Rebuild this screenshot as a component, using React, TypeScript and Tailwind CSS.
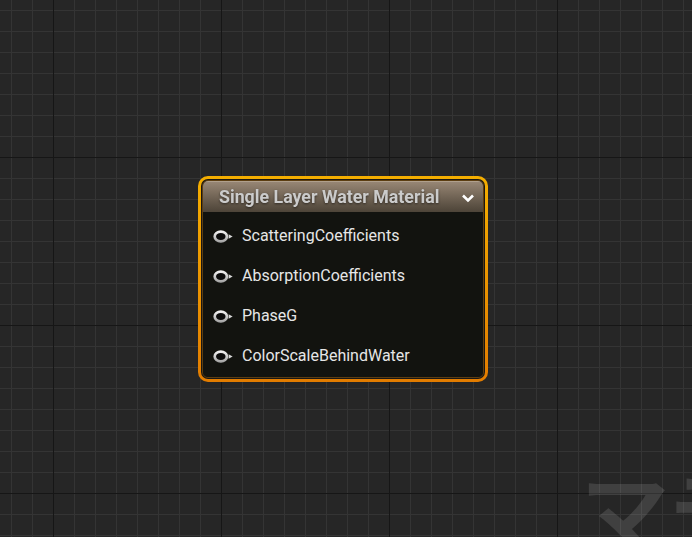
import React from "react";

const pins = [
  "ScatteringCoefficients",
  "AbsorptionCoefficients",
  "PhaseG",
  "ColorScaleBehindWater",
];

function PinIcon() {
  return (
    <svg width="21" height="13" viewBox="0 0 21 13" className="shrink-0">
      <defs>
        <linearGradient id="pinring" x1="0" y1="0" x2="0" y2="1">
          <stop offset="0" stopColor="#f0f0f0" />
          <stop offset="1" stopColor="#a8a8a8" />
        </linearGradient>
      </defs>
      <ellipse cx="7.8" cy="6.5" rx="6.1" ry="4.9" fill="#0c0c0c" stroke="url(#pinring)" strokeWidth="2.7" />
      <path d="M15.6 4.2 L19.6 6.5 L15.6 8.8 Z" fill="#d8d8d8" />
    </svg>
  );
}

export default function App() {
  return (
    <div
      className="relative w-[692px] h-[537px] overflow-hidden bg-[#262626] bg-[image:linear-gradient(to_right,#161616_1px,transparent_1px),linear-gradient(to_bottom,#161616_1px,transparent_1px),linear-gradient(to_right,#343434_1px,transparent_1px),linear-gradient(to_bottom,#343434_1px,transparent_1px)] bg-[size:168px_168px,168px_168px,21px_21px,21px_21px] bg-[position:53px_157px,53px_157px,11px_10px,11px_10px]"
      style={{ fontFamily: "Roboto, 'Noto Sans', sans-serif" }}
    >
      {/* watermark */}
      <div
        className="absolute left-[581px] top-[464px] whitespace-nowrap text-[88px] leading-none font-bold text-white/[0.12]"
        style={{ fontFamily: "'Noto Sans CJK JP', sans-serif" }}
      >
        マテリアル
      </div>

      {/* node */}
      <div className="absolute left-[198px] top-[176px] w-[290px] h-[206px] rounded-[10px] bg-gradient-to-b from-[#f4ae00] to-[#e27c00] p-[3px]">
        <div className="w-full h-full rounded-[7px] bg-[#191715] p-[1px]">
          <div className="flex flex-col w-full h-full rounded-[6px] border border-[#5c3e12] overflow-hidden">
            <div className="flex items-center justify-between h-[31px] shrink-0 pl-[16px] pr-[8px] pt-[1px] bg-gradient-to-b from-[#978674] to-[#4d4438] border-t border-[#b0a08c]">
              <span className="text-[17.8px] font-bold text-[#cbcbcb] drop-shadow-[0_1px_1px_rgba(0,0,0,0.5)]">
                Single Layer Water Material
              </span>
              <svg width="14" height="10" viewBox="0 0 14 10">
                <path d="M2 2.5 L7 7.5 L12 2.5" fill="none" stroke="#ffffff" strokeWidth="2.6" />
              </svg>
            </div>
            <div className="flex flex-col flex-1 bg-[#12130f]/95 pt-[4px]">
              {pins.map((p) => (
                <div key={p} className="flex items-center h-[40px] pl-[10px] gap-[8px]">
                  <PinIcon />
                  <span className="text-[16px] text-[#e6e6e6]">{p}</span>
                </div>
              ))}
            </div>
          </div>
        </div>
      </div>
    </div>
  );
}
